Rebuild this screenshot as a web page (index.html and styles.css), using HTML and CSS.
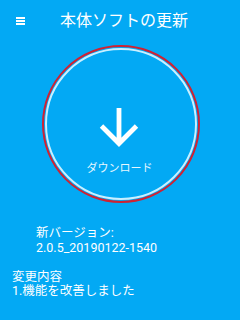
FILE: index.html
```html
<!DOCTYPE html>
<html lang="ja">
<head>
<meta charset="utf-8">
<link rel="stylesheet" href="styles.css">
</head>
<body>
<div class="app">
  <header class="bar">
    <div class="menu"><span></span><span></span><span></span></div>
    <h1 class="title">本体ソフトの更新</h1>
  </header>
  <div class="circle-wrap">
    <div class="circle">
      <div class="inner">
        <svg class="arrow" width="40" height="40" viewBox="0 0 40 40">
          <path d="M20 1 V36 M2.5 19 L20 36.5 L37.5 19" fill="none" stroke="#ffffff" stroke-width="4.8" stroke-linecap="butt" stroke-linejoin="miter"/>
        </svg>
        <div class="dl">ダウンロード</div>
      </div>
    </div>
  </div>
  <div class="version">
    <div>新バージョン:</div>
    <div>2.0.5_20190122-1540</div>
  </div>
  <div class="changes">
    <div>変更内容</div>
    <div>1.機能を改善しました</div>
  </div>
</div>
</body>
</html>
```
FILE: styles.css
```css
html, body {
  margin: 0;
  padding: 0;
  background: #03a9f4;
}
body {
  font-family: Roboto, "Noto Sans CJK JP", sans-serif;
  color: #ffffff;
  width: 240px;
  height: 320px;
  overflow: hidden;
}
.bar {
  height: 42px;
  display: flex;
  align-items: center;
}
.menu {
  display: flex;
  flex-direction: column;
  gap: 1.5px;
  margin-left: 16px;
  width: 9px;
}
.menu span {
  display: block;
  height: 1.5px;
  background: #ffffff;
}
.title {
  margin: 0 0 0 35px;
  font-size: 16px;
  font-weight: normal;
  line-height: 20px;
}
.circle-wrap {
  display: flex;
  padding-left: 42px;
  margin-top: 3px;
}
.circle {
  width: 158px;
  height: 158px;
  box-sizing: border-box;
  border-radius: 50%;
  border: 2.5px solid #cf2233;
  padding: 1px;
}
.inner {
  width: 100%;
  height: 100%;
  box-sizing: border-box;
  border-radius: 50%;
  border: 2px solid #c9efff;
  display: flex;
  flex-direction: column;
  align-items: center;
  padding-top: 57px;
}
.arrow {
  display: block;
  margin-left: -4px;
}
.dl {
  margin-top: 15px;
  font-size: 11px;
  line-height: 14px;
  color: #e6f7ff;
  margin-left: -3px;
}
.version {
  margin-top: 22px;
  padding-left: 36px;
  font-size: 12.5px;
  line-height: 15px;
}
.changes {
  margin-top: 15px;
  padding-left: 12px;
  font-size: 12.5px;
  line-height: 14px;
}
```
